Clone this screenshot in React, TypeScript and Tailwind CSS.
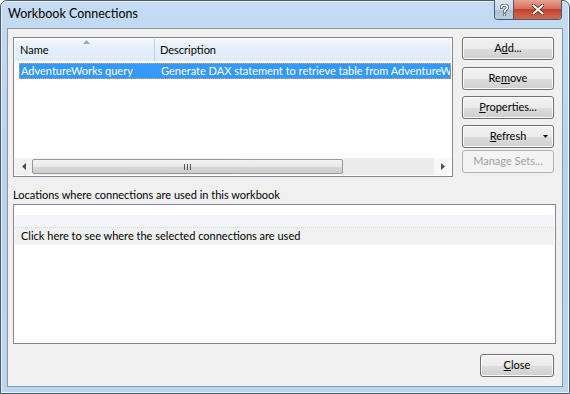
import type { ReactNode } from "react"

const font = { fontFamily: 'Lato, "Noto Sans", sans-serif' }

function Btn({ children, className = "", disabled = false }: { children: ReactNode; className?: string; disabled?: boolean }) {
  return (
    <div
      className={`flex h-[23px] items-center justify-center rounded-[3px] border text-[11px] ${
        disabled
          ? "border-[#adb2b5] bg-[#f4f4f4] text-[#a0a0a0]"
          : "border-[#707070] bg-[linear-gradient(#f2f2f2_0%,#ebebeb_50%,#dddddd_51%,#cfcfcf_100%)] text-black shadow-[inset_0_0_0_1px_#fcfcfc]"
      } ${className}`}>
      {children}
    </div>
  )
}

function ScrollArrow({ dir }: { dir: "l" | "r" }) {
  return (
    <div className="flex w-[17px] items-center justify-center">
      <svg width="4" height="7" viewBox="0 0 4 7">
        {dir === "l" ? <path d="M4 0 L0 3.5 L4 7 Z" fill="#4d4d4d" /> : <path d="M0 0 L4 3.5 L0 7 Z" fill="#4d4d4d" />}
      </svg>
    </div>
  )
}

export default function App() {
  return (
    <div className="h-[394px] w-[570px] bg-white" style={font}>
      <div className="flex h-[394px] w-[570px] flex-col rounded-t-[7px] border border-[#505a66] bg-[linear-gradient(180deg,#c4dbf3_0%,#b9d3ef_40%,#bcd6f1_100%)] px-[6px] pb-[6px] shadow-[inset_0_0_0_1px_#e6f0fa]">
        <div className="relative flex h-[27px] shrink-0 items-center">
          <span className="pl-[1px] text-[12.5px] leading-none text-black">Workbook Connections</span>
          <div className="absolute right-[1px] top-[-1px] flex h-[20px] overflow-hidden rounded-b-[4px] border border-t-0 border-[#49576b]">
            <div className="flex w-[19px] items-center justify-center border-r border-[#49576b] bg-[linear-gradient(#dce6f2_0%,#c8d6e6_50%,#aebfd4_51%,#bccce0_100%)]">
              <svg width="9" height="12" viewBox="0 0 9 12">
                <path d="M1.5 3.5 C1.5 0.5 7.5 0.5 7.5 3.5 C7.5 5.5 4.5 5.5 4.5 8" fill="none" stroke="#4a5868" strokeWidth="3.2" strokeLinecap="round" />
                <circle cx="4.5" cy="10.8" r="1.6" fill="#4a5868" />
                <path d="M1.5 3.5 C1.5 0.5 7.5 0.5 7.5 3.5 C7.5 5.5 4.5 5.5 4.5 8" fill="none" stroke="#ffffff" strokeWidth="1.6" strokeLinecap="round" />
                <circle cx="4.5" cy="10.8" r="0.9" fill="#ffffff" />
              </svg>
            </div>
            <div className="flex w-[47px] items-center justify-center bg-[linear-gradient(#e8a397_0%,#d6705d_45%,#c2412a_50%,#d26b52_100%)]">
              <svg width="12" height="11" viewBox="0 0 12 11">
                <path d="M1.5 1.5 L10.5 9.5 M10.5 1.5 L1.5 9.5" stroke="#4b1f17" strokeWidth="3.6" strokeLinecap="round" />
                <path d="M1.5 1.5 L10.5 9.5 M10.5 1.5 L1.5 9.5" stroke="#ffffff" strokeWidth="2.2" strokeLinecap="round" />
              </svg>
            </div>
          </div>
        </div>

        <div className="flex flex-1 flex-col border border-[#8a96a4] bg-[#f0f0f0] px-[5px] pt-[8px] text-[11px] text-black">
          <div className="flex gap-[9px]">
            <div className="flex h-[140px] w-[440px] flex-col border border-[#828790] bg-white p-[1px]">
              <div className="relative flex h-[22px] bg-[linear-gradient(#f4f8fc_0%,#e5eff9_40%,#dfebf8_100%)]">
                <div className="flex w-[140px] items-end border-r border-[#bad3ee] pb-[3px] pl-[5px]">Name</div>
                <div className="flex items-end pb-[3px] pl-[5px]">Description</div>
                <svg className="absolute left-[68px] top-[1px]" width="7" height="4" viewBox="0 0 7 4">
                  <path d="M0 4 L3.5 0 L7 4 Z" fill="#8fa9c9" />
                </svg>
              </div>
              <div className="mt-[2px] ml-[4px] flex h-[16px] items-center overflow-hidden whitespace-nowrap border border-dotted border-[#e0a050] bg-[#3399ff] text-white">
                <span className="w-[140px] shrink-0 pl-[1px]">AdventureWorks query</span>
                <span className="pl-[1px]">Generate DAX statement to retrieve table from AdventureWorks</span>
              </div>
              <div className="flex-1" />
              <div className="flex h-[17px] bg-[linear-gradient(90deg,#f0f0f0,#f8f8f8)]">
                <ScrollArrow dir="l" />
                <div className="my-[1px] flex w-[311px] items-center justify-center rounded-[2px] border border-[#979797] bg-[linear-gradient(#f2f2f2_0%,#e8e8e8_50%,#d6d6d6_51%,#cfcfcf_100%)]">
                  <div className="flex gap-[2px]">
                    <div className="h-[6px] w-[1px] bg-[#555]" />
                    <div className="h-[6px] w-[1px] bg-[#555]" />
                    <div className="h-[6px] w-[1px] bg-[#555]" />
                  </div>
                </div>
                <div className="flex-1 bg-[#ececec]" />
                <ScrollArrow dir="r" />
              </div>
            </div>

            <div className="flex w-[92px] flex-col">
              <Btn>
                <span>
                  A<u>d</u>d...
                </span>
              </Btn>
              <Btn className="mt-[7px]">
                <span>
                  Re<u>m</u>ove
                </span>
              </Btn>
              <Btn className="mt-[6px]">
                <span>
                  <u>P</u>roperties...
                </span>
              </Btn>
              <Btn className="relative mt-[6px]">
                <span>
                  <u>R</u>efresh
                </span>
                <svg className="absolute right-[5px] top-[9px]" width="5" height="3" viewBox="0 0 5 3">
                  <path d="M0 0 L5 0 L2.5 3 Z" fill="#000" />
                </svg>
              </Btn>
              <Btn disabled className="mt-[2px]">
                Manage Sets...
              </Btn>
            </div>
          </div>

          <div className="mt-[10px] h-[16px] leading-[16px]">Locations where connections are used in this workbook</div>

          <div className="mt-[1px] flex h-[140px] w-[543px] flex-col border border-[#828790] bg-white p-[1px]">
            <div className="h-[9px]" />
            <div className="h-[13px] border-b border-dotted border-[#d0d8e0] bg-[#f3f5f8]" />
            <div className="flex h-[17px] items-center bg-[#f0f0f0] pl-[6px]">Click here to see where the selected connections are used</div>
          </div>

          <div className="flex flex-1 items-start justify-end pr-[3px] pt-[10px]">
            <Btn className="w-[74px]">
              <span>
                <u>C</u>lose
              </span>
            </Btn>
          </div>
        </div>
      </div>
    </div>
  )
}
